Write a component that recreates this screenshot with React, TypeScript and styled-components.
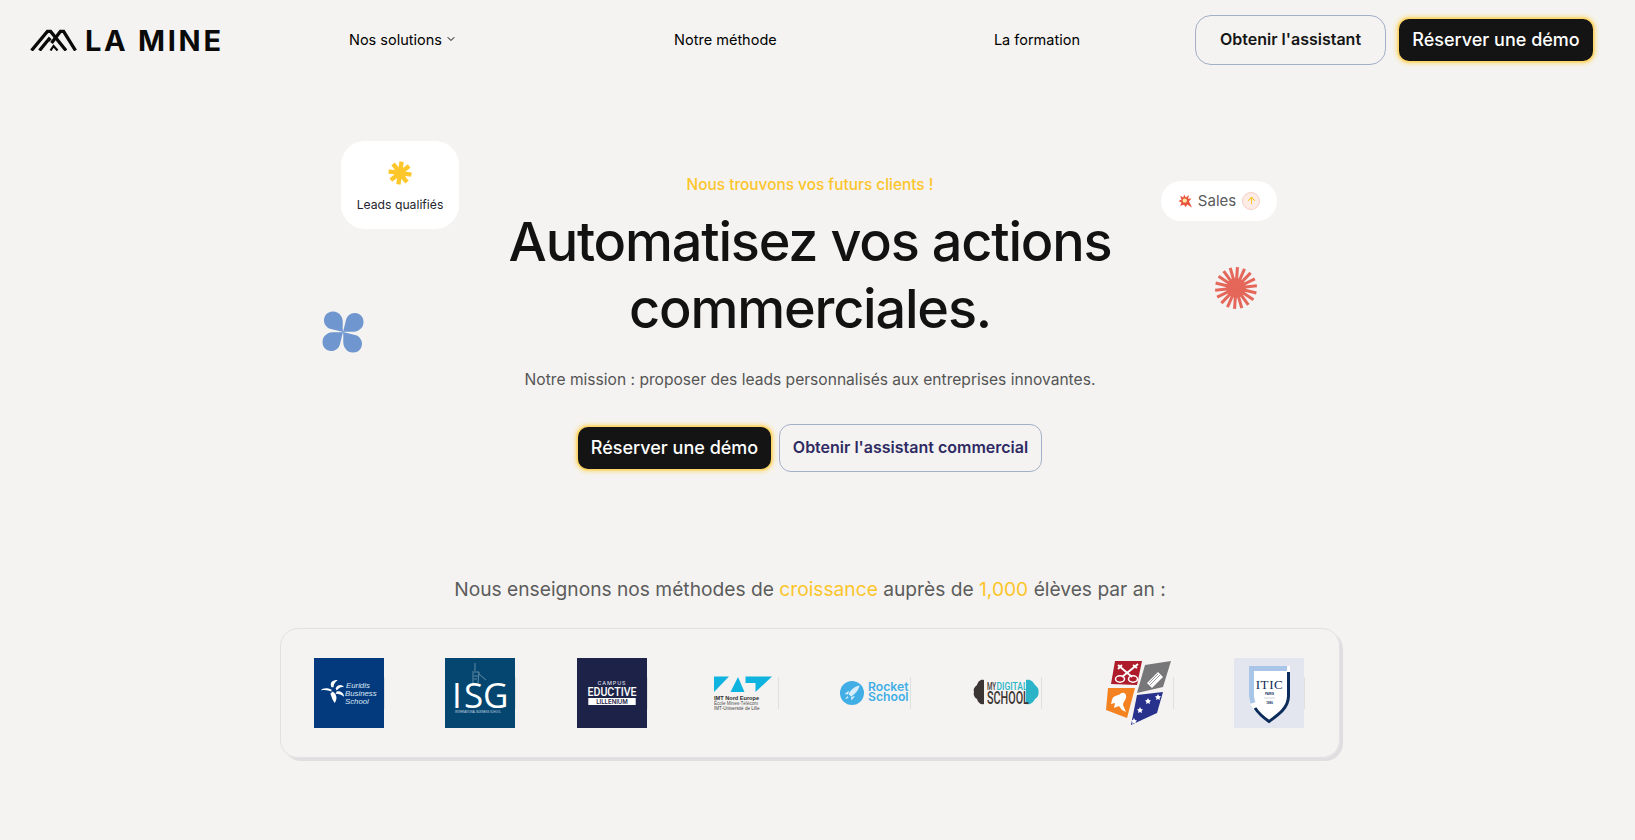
import styled, { createGlobalStyle } from "styled-components"
import { ArrowUp, ChevronDown } from "lucide-react"

const GlobalStyle = createGlobalStyle`
  html, body {
    margin: 0;
    background: #f4f3f1;
    font-family: "Inter", "Liberation Sans", sans-serif;
    color: #111;
  }
`

const Page = styled.div`
  width: 1620px;
  height: 840px;
  overflow: hidden;
`

const Header = styled.header`
  display: flex;
  align-items: center;
  height: 80px;
  padding: 0 27px 0 30px;
`

const Logo = styled.div`
  display: flex;
  align-items: center;
  gap: 8px;
  width: 193px;
  flex-shrink: 0;
  svg {
    flex-shrink: 0;
  }
`

const LogoName = styled.span`
  font-size: 29px;
  line-height: 1;
  font-weight: 700;
  letter-spacing: 2.7px;
  color: #0a0a0a;
  white-space: nowrap;
`

const Nav = styled.nav`
  flex: 1;
  display: flex;
  justify-content: space-between;
  margin: 0 115px 2px 126px;
`

const NavItem = styled.a`
  display: flex;
  align-items: center;
  gap: 3px;
  font-size: 14.5px;
  font-weight: 400;
  color: #000;
`

const HeaderActions = styled.div`
  display: flex;
  align-items: center;
  gap: 13px;
`

const Button = styled.button<{ $dark?: boolean; $tint?: string; $w: number; $h: number; $r: number; $fs: number }>`
  width: ${(p) => p.$w}px;
  height: ${(p) => p.$h}px;
  border-radius: ${(p) => p.$r}px;
  font-family: inherit;
  font-size: ${(p) => p.$fs}px;
  font-weight: ${(p) => (p.$dark ? 500 : 600)};
  padding: 0 0 2px;
  white-space: nowrap;
  color: ${(p) => (p.$dark ? "#fff" : p.$tint || "#151515")};
  background: ${(p) => (p.$dark ? "#141414" : "transparent")};
  border: ${(p) => (p.$dark ? "none" : "1px solid #a3aec8")};
  box-shadow: ${(p) => (p.$dark ? "0 0 0 1.5px #fdd66b, 0 0 5px 2px #fdd66b" : "none")};
`

const Hero = styled.section`
  position: relative;
  width: 1060px;
  margin: 0 auto;
  height: 497px;
  display: flex;
  flex-direction: column;
  align-items: center;
  padding-top: 95px;
  box-sizing: border-box;
`

const Eyebrow = styled.p`
  margin: 0;
  font-size: 15.4px;
  line-height: 20px;
  font-weight: 500;
  color: #fcc52b;
`

const Title = styled.h1`
  margin: 13px 0 0;
  font-size: 54px;
  line-height: 67px;
  font-weight: 500;
  letter-spacing: -1.2px;
  text-align: center;
  color: #121212;
`

const Lead = styled.p`
  margin: 26px 0 0;
  font-size: 15.6px;
  line-height: 24px;
  color: #555;
`

const HeroActions = styled.div`
  display: flex;
  align-items: center;
  gap: 8px;
  margin-top: 32px;
`

const LeadsCard = styled.div`
  position: absolute;
  left: 61px;
  top: 61px;
  width: 118px;
  height: 88px;
  border-radius: 24px;
  background: #fff;
  display: flex;
  flex-direction: column;
  align-items: center;
  padding-top: 20px;
  box-sizing: border-box;
  gap: 12px;
  font-size: 12.2px;
  line-height: 16px;
  color: #23252e;
`

const SalesPill = styled.div`
  position: absolute;
  left: 881px;
  top: 101px;
  width: 116px;
  height: 40px;
  border-radius: 20px;
  background: #fff;
  display: flex;
  align-items: center;
  justify-content: center;
  gap: 6px;
  font-size: 15px;
  color: #5a5a5a;
  padding-bottom: 1px;
  box-sizing: border-box;
`

const ArrowBadge = styled.span`
  width: 16px;
  height: 16px;
  border-radius: 50%;
  background: #fdece6;
  border: 1px solid #f6cfc5;
  color: #fcc52b;
  display: flex;
  align-items: center;
  justify-content: center;
`

const Floating = styled.svg<{ $x: number; $y: number }>`
  position: absolute;
  left: ${(p) => p.$x}px;
  top: ${(p) => p.$y}px;
`

const Schools = styled.section`
  display: flex;
  flex-direction: column;
  align-items: center;
`

const SchoolsTitle = styled.p`
  margin: 0;
  font-size: 19.2px;
  line-height: 24px;
  color: #5c5c5c;
  font-weight: 400;
`

const Accent = styled.span`
  color: #fcc52b;
`

const LogoCard = styled.div`
  margin-top: 27px;
  width: 1060px;
  height: 130px;
  box-sizing: border-box;
  padding: 0 35px 0 33px;
  display: flex;
  align-items: center;
  justify-content: space-between;
  border: 1px solid #e2e0e3;
  border-radius: 18px;
  box-shadow: 3px 3px 0 #e0dee1;
`

const SchoolTile = styled.div<{ $bg?: string }>`
  position: relative;
  width: 70px;
  height: 70px;
  background: ${(p) => p.$bg || "transparent"};
  &::after {
    content: "";
    position: absolute;
    right: -1px;
    top: 19px;
    width: 1px;
    height: 32px;
    background: #e0e0e0;
  }
`

const TileArt = styled.svg`
  display: block;
  width: 70px;
  height: 70px;
`

function LogoMark() {
  return (
    <svg width="47" height="22" viewBox="0 0 47 22" fill="none" stroke="#0a0a0a" strokeWidth="3.3">
      <path d="M1.5 21.5 L17.4 2.4 H20.6 L36 21.5" />
      <path d="M45.5 21.5 L33.6 2.4 H30.4 L21.5 14" />
      <path d="M9.5 21.5 L19 10 L20.5 11.5" />
      <path d="M20.5 21.5 L23.6 17 L27.5 21.5" strokeWidth="2.2" />
    </svg>
  )
}

function Burst() {
  const rays = Array.from({ length: 18 }, (_, i) => i * 20)
  return (
    <Floating $x={934} $y={186} width="44" height="44" viewBox="-22 -22 44 44">
      <circle r="10" fill="#e4675a" />
      {rays.map((a) => (
        <line key={a} x1="0" y1="0" x2="0" y2="-21" stroke="#e4675a" strokeWidth="3" transform={`rotate(${a + 4})`} />
      ))}
    </Floating>
  )
}

function Clover() {
  return (
    <Floating $x={41} $y={230} width="44" height="44" viewBox="-22 -22 44 44">
      {[0, 90, 180, 270].map((a) => (
        <path
          key={a}
          d="M0 0 C-1 -6 1 -12 -2 -16 C-5 -22 -15 -22 -18 -16 C-21 -10 -17 -4 -12 -3 C-8 -2 -4 -1 0 0 Z"
          fill="#6f96cf"
          transform={`rotate(${a})`}
        />
      ))}
    </Floating>
  )
}

function Asterisk() {
  return (
    <svg width="24" height="24" viewBox="-12 -12 24 24">
      {[0, 45, 90, 135].map((a) => (
        <rect key={a} x="-2.2" y="-11.5" width="4.4" height="23" fill="#fdc72c" transform={`rotate(${a + 8})`} />
      ))}
      <circle r="6" fill="#fdc72c" />
    </svg>
  )
}

function Explosion() {
  return (
    <svg width="14" height="14" viewBox="-8 -8 16 16">
      <path
        d="M-1 -7.5 L1 -4 L4.5 -7 L3.6 -2.6 L7.5 -3 L4.6 0.2 L8 7.5 L2.4 4 L1 7 L-1.2 4.2 L-5.5 5.5 L-4 1.8 L-7.5 0 L-4 -1.8 L-5.6 -6 L-2 -4 Z"
        fill="#e8553f"
      />
      <circle cx="-0.3" cy="-0.5" r="2.5" fill="#fde9a0" />
    </svg>
  )
}

function Euridis() {
  return (
    <TileArt viewBox="0 0 70 70">
      <g fill="#fff" transform="translate(18.5 32.5) scale(1.05)">
        <path d="M-1 -1 C-6 -3 -10 -2 -11 0 C-7 -1 -4 0 -1 1 Z" />
        <path d="M-1 -3 C-3 -8 0 -10 5 -10 C2 -8 1 -5 1 -3 Z" />
        <path d="M3 -2 C5 -6 9 -6 11 -3 C8 -4 6 -2 4 0 Z" />
        <path d="M4 1 C8 0 11 3 11 6 C9 4 6 3 3 3 Z" />
        <path d="M0 1 C4 3 5 8 2 12 C0 9 -1 6 -2 3 Z" />
      </g>
      <g fill="#dfe8f4" fontFamily="Liberation Sans" fontSize="7.8" fontStyle="italic">
        <text x="32" y="30">Euridis</text>
        <text x="31" y="38">Business</text>
        <text x="31" y="45.5">School</text>
      </g>
    </TileArt>
  )
}

function Isg() {
  return (
    <TileArt viewBox="0 0 70 70">
      <path
        d="M30 5 V13 M27 14 H34 L33 25 M28 15 L28 25 M34 16 L41 22 M29 18 H33 M29 21 H32"
        stroke="#9fb7c8"
        strokeWidth="0.6"
        fill="none"
      />
      <g fill="#fff" fontFamily="Open Sans" fontSize="35" fontWeight="500">
        <text x="7" y="50">I</text>
        <text x="19" y="50">S</text>
        <text x="38" y="50">G</text>
      </g>
      <text x="10" y="54.5" fill="#cfdbe4" fontFamily="Liberation Sans" fontSize="2.6">INTERNATIONAL BUSINESS SCHOOL</text>
    </TileArt>
  )
}

function Eductive() {
  return (
    <TileArt viewBox="0 0 70 70">
      <text x="35" y="26.8" textAnchor="middle" fill="#d7d9e3" fontFamily="Inter" fontSize="5.4" fontWeight="500" letterSpacing="0.9">CAMPUS</text>
      <text x="35" y="38.2" textAnchor="middle" fill="#fff" fontFamily="Roboto" fontSize="13" fontWeight="500" transform="translate(35 0) scale(0.82 1) translate(-35 0)">EDUCTIVE</text>
      <rect x="11.3" y="40" width="47.4" height="7" fill="#fff" />
      <text x="35" y="46" textAnchor="middle" fill="#1d2348" fontFamily="Inter" fontSize="6" fontWeight="600">LILLENIUM</text>
    </TileArt>
  )
}

function Imt() {
  return (
    <TileArt viewBox="0 0 70 70">
      <g fill="#0fb3e0">
        <path d="M6 18.5 H21 L6 34 Z" />
        <path d="M22.5 34 L30 19 L36.5 34 Z" />
        <path d="M37.5 18.5 H64 L47.5 34 V25 H37.5 Z" />
      </g>
      <g fontFamily="Liberation Sans">
        <text x="6" y="41.5" fontSize="5.6" fontWeight="700" fill="#2b2b2b">IMT Nord Europe</text>
        <text x="6" y="46.8" fontSize="4.6" fill="#555">École Mines-Télécom</text>
        <text x="6" y="52" fontSize="4.6" fill="#444">IMT-Université de Lille</text>
      </g>
    </TileArt>
  )
}

function Rocket() {
  return (
    <TileArt viewBox="0 0 70 70">
      <circle cx="12" cy="35" r="12" fill="#41aee6" />
      <path
        d="M19.5 27.5 C14 28.5 10.5 32.5 8.5 36 L11 38.5 C14.5 36.5 18.5 33 19.5 27.5 Z M9 32.5 L4.5 36 L8 36.5 Z M15 38 L11.5 42.5 L11 39 Z M7.5 38 L5 41 L8.5 40 Z"
        fill="#d7edf9"
      />
      <g fill="#41aee6" fontFamily="Inter" fontSize="12.2" fontWeight="600">
        <text x="28" y="33">Rocket</text>
        <text x="28" y="43">School</text>
      </g>
    </TileArt>
  )
}

function MyDigital() {
  return (
    <TileArt viewBox="0 0 70 70">
      <path
        d="M13 22 C9 21 7 24 6 27 C3 29 2 32 3 34 C2 37 4 40 6 41 C7 45 10 47 13 46 Z"
        fill="#3b3533"
      />
      <path
        d="M55 22 C60 21 62 24 64 27 C67 29 68 32 67.5 34 C68 37 66 40 64 41 C62 45 59 47 55 46 Z"
        fill="#2bb4c8"
      />
      <text transform="translate(16 31.5) scale(0.62 1)" fill="#3b3533" fontFamily="Roboto" fontSize="10" fontWeight="500">MY</text>
      <text transform="translate(25.5 31.5) scale(0.85 1)" fill="#2bb4c8" fontFamily="Roboto" fontSize="10" fontWeight="500">DIGITAL</text>
      <text transform="translate(16 46) scale(0.6 1)" fill="#3b3533" fontFamily="Roboto" fontSize="18" fontWeight="500">SCHOOL</text>
    </TileArt>
  )
}

function Crest() {
  return (
    <TileArt viewBox="0 0 70 70">
      <path d="M12 3 H39 L34 27 L8 26 Z" fill="#ae1c2c" />
      <path d="M42 7 L68 3 L60 29 L34 35 Z" fill="#77777a" />
      <path d="M5 30 L32 30 L24 60 L3 52 Z" fill="#f58220" />
      <path d="M34 37 L60 34 L54 55 L28 67 Z" fill="#28318c" />
      <path d="M15 7 L29 19 M35 6 L19 19 M15 11 L19 7 M34 10 L30 7" stroke="#fff" strokeWidth="1.9" fill="none" />
      <ellipse cx="17" cy="21" rx="4.5" ry="3.2" fill="none" stroke="#fff" strokeWidth="1.5" />
      <ellipse cx="30" cy="21" rx="4.5" ry="3.2" fill="none" stroke="#fff" strokeWidth="1.5" />
      <path d="M44 25 L55 14 L60 19 L49 30 Z" fill="#fff" />
      <path d="M46 25 L55 16 M47 27 L57 17" stroke="#77777a" strokeWidth="0.7" />
      <path
        d="M9 42 C10 37 15 38 17 36 C21 33 24 36 23 40 C22 43 20 44 20 47 L23 54 L19 52 L16 48 L11 50 L12 45 L8 46 Z"
        fill="#fff"
      />
      <g fill="#fff">
        <path d="M55 36 L56 38 L58 38.5 L56.5 40 L57 42 L55 41 L53 42 L53.5 40 L52 38.5 L54 38 Z" />
        <path d="M45 40 L46 42 L48 42.5 L46.5 44 L47 46 L45 45 L43 46 L43.5 44 L42 42.5 L44 42 Z" />
        <path d="M37 49 L38 51 L40 51.5 L38.5 53 L39 55 L37 54 L35 55 L35.5 53 L34 51.5 L36 51 Z" />
        <path d="M31 60 L32 62 L34 62.5 L32.5 64 L33 66 L31 65 L29 66 L29.5 64 L28 62.5 L30 62 Z" />
      </g>
    </TileArt>
  )
}

function Itic() {
  return (
    <TileArt viewBox="0 0 70 70">
      <path d="M15 8 H56 V38 C56 50 45 57 35 65 C25 57 15 50 15 38 Z" fill="#fff" />
      <path d="M54.5 14 V38 C54.5 50 44 57 35 63.5 C30 60 25 56 21 50" fill="none" stroke="#0c2c5c" strokeWidth="3" />
      <path d="M53 10.5 H17.5 V38 C17.5 40 18 42 19 45" fill="none" stroke="#a9c6e8" strokeWidth="5" />
      <text x="35.5" y="30.5" textAnchor="middle" fill="#0c2c5c" fontFamily="Liberation Serif" fontSize="13" letterSpacing="0.6">ITIC</text>
      <text x="35.5" y="37" textAnchor="middle" fill="#0c2c5c" fontFamily="Liberation Sans" fontSize="3" fontWeight="700">PARIS</text>
      <path d="M30 40 H41" stroke="#9aa8bd" strokeWidth="0.5" />
      <text x="35.5" y="45.5" textAnchor="middle" fill="#0c2c5c" fontFamily="Liberation Sans" fontSize="3" fontWeight="700">1986</text>
    </TileArt>
  )
}

export default function App() {
  return (
    <>
      <GlobalStyle />
      <Page>
        <Header>
          <Logo>
            <LogoMark />
            <LogoName>LA MINE</LogoName>
          </Logo>
          <Nav>
            <NavItem>
              Nos solutions <ChevronDown size={12} strokeWidth={2} />
            </NavItem>
            <NavItem>Notre méthode</NavItem>
            <NavItem>La formation</NavItem>
          </Nav>
          <HeaderActions>
            <Button $w={191} $h={50} $r={16} $fs={16}>Obtenir l'assistant</Button>
            <Button $dark $w={194} $h={42} $r={10} $fs={18}>Réserver une démo</Button>
          </HeaderActions>
        </Header>
        <Hero>
          <LeadsCard>
            <Asterisk />
            Leads qualifiés
          </LeadsCard>
          <SalesPill>
            <Explosion />
            Sales
            <ArrowBadge>
              <ArrowUp size={11} strokeWidth={2.2} />
            </ArrowBadge>
          </SalesPill>
          <Clover />
          <Burst />
          <Eyebrow>Nous trouvons vos futurs clients !</Eyebrow>
          <Title>
            Automatisez vos actions
            <br />
            commerciales.
          </Title>
          <Lead>Notre mission : proposer des leads personnalisés aux entreprises innovantes.</Lead>
          <HeroActions>
            <Button $dark $w={193} $h={42} $r={10} $fs={18}>Réserver une démo</Button>
            <Button $tint="#2f2a63" $w={263} $h={48} $r={12} $fs={16}>Obtenir l'assistant commercial</Button>
          </HeroActions>
        </Hero>
        <Schools>
          <SchoolsTitle>
            Nous enseignons nos méthodes de <Accent>croissance</Accent> auprès de <Accent>1,000</Accent> élèves par an :
          </SchoolsTitle>
          <LogoCard>
            <SchoolTile $bg="#023a7d"><Euridis /></SchoolTile>
            <SchoolTile $bg="#04466f"><Isg /></SchoolTile>
            <SchoolTile $bg="#1d2348"><Eductive /></SchoolTile>
            <SchoolTile><Imt /></SchoolTile>
            <SchoolTile><Rocket /></SchoolTile>
            <SchoolTile><MyDigital /></SchoolTile>
            <SchoolTile><Crest /></SchoolTile>
            <SchoolTile $bg="#e4e6ef"><Itic /></SchoolTile>
          </LogoCard>
        </Schools>
      </Page>
    </>
  )
}
